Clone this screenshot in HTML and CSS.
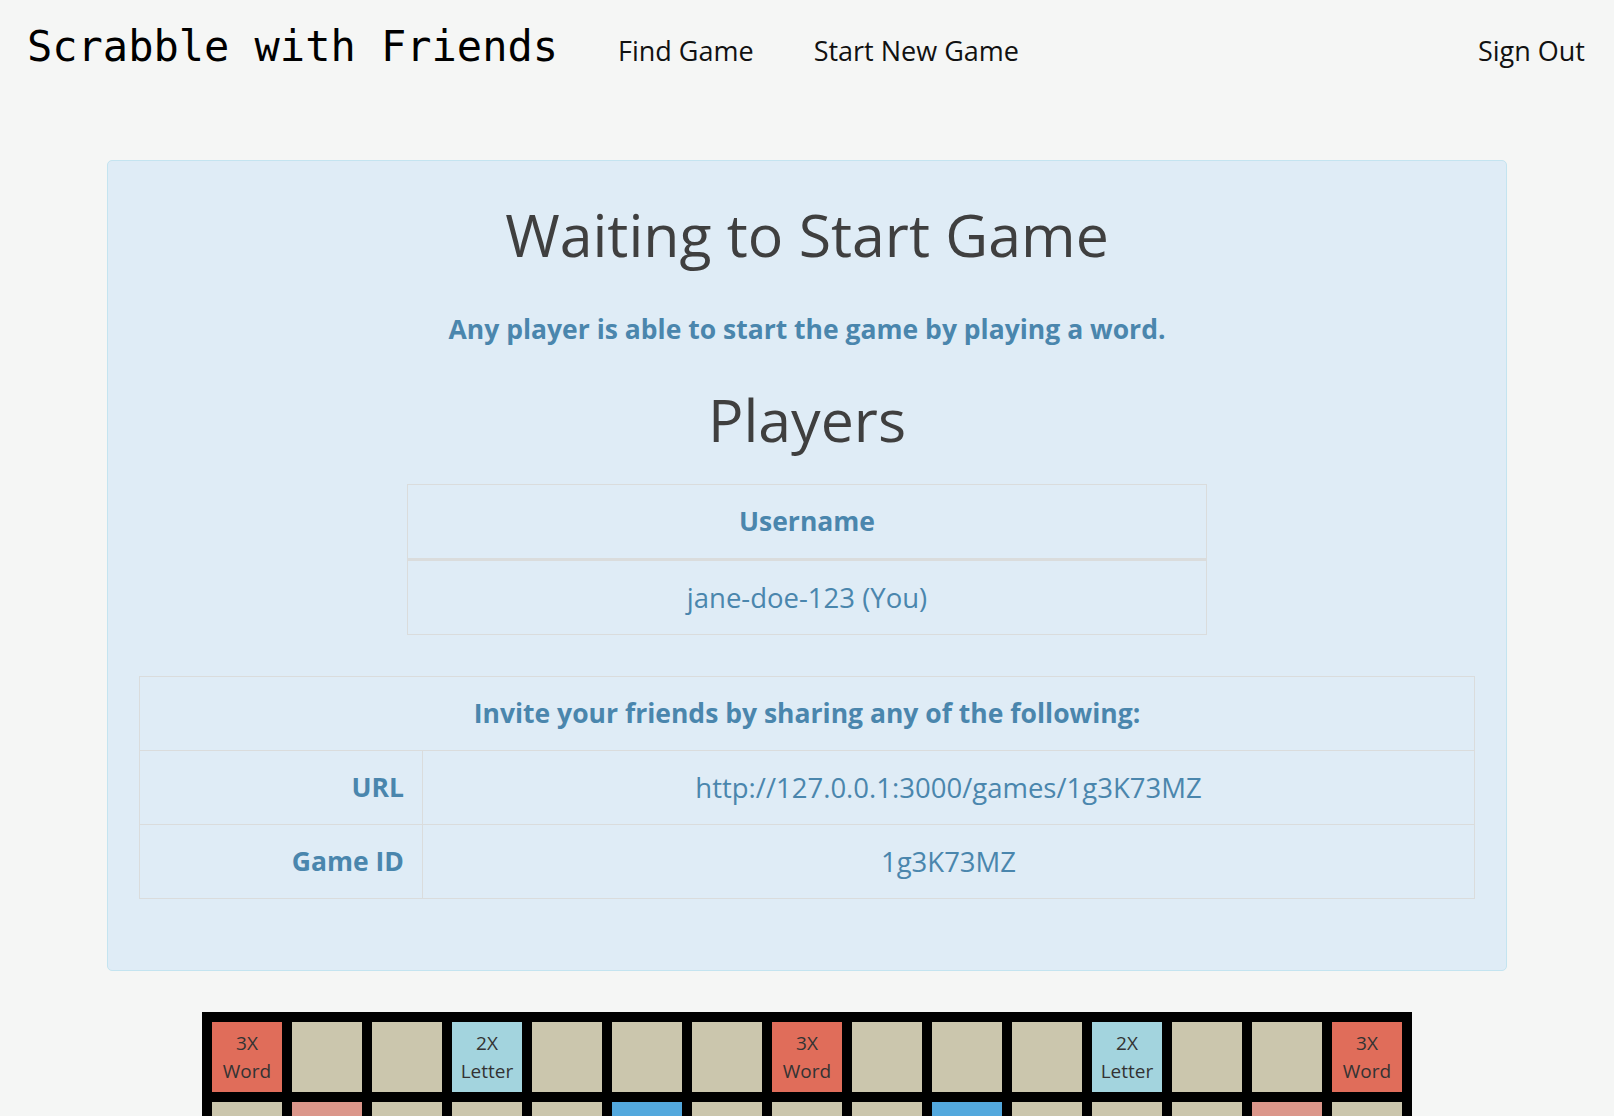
FILE: index.html
```html
<!DOCTYPE html>
<html lang="en">
<head>
<meta charset="utf-8">
<title>Scrabble with Friends</title>
<link rel="stylesheet" href="styles.css">
</head>
<body>
<header class="navbar">
  <a class="brand" href="#">Scrabble with Friends</a>
  <nav class="nav-left">
    <a href="#">Find Game</a>
    <a href="#">Start New Game</a>
  </nav>
  <nav class="nav-right">
    <a href="#">Sign Out</a>
  </nav>
</header>

<main class="main">
  <section class="panel">
    <h1 class="title">Waiting to Start Game</h1>
    <p class="subtitle">Any player is able to start the game by playing a word.</p>
    <h2 class="players-title">Players</h2>
    <table class="table players">
      <thead><tr><th>Username</th></tr></thead>
      <tbody><tr><td>jane-doe-123 (You)</td></tr></tbody>
    </table>
    <table class="table invite">
      <thead><tr><th colspan="2">Invite your friends by sharing any of the following:</th></tr></thead>
      <tbody>
        <tr><th class="label">URL</th><td>http://127.0.0.1:3000/games/1g3K73MZ</td></tr>
        <tr><th class="label">Game ID</th><td>1g3K73MZ</td></tr>
      </tbody>
    </table>
  </section>

  <div class="board">
    <div class="cell tw"><span>3X</span><span>Word</span></div><div class="cell"></div><div class="cell"></div><div class="cell dl"><span>2X</span><span>Letter</span></div><div class="cell"></div><div class="cell"></div><div class="cell"></div><div class="cell tw"><span>3X</span><span>Word</span></div><div class="cell"></div><div class="cell"></div><div class="cell"></div><div class="cell dl"><span>2X</span><span>Letter</span></div><div class="cell"></div><div class="cell"></div><div class="cell tw"><span>3X</span><span>Word</span></div>
    <div class="cell"></div><div class="cell dw"><span>2X</span><span>Word</span></div><div class="cell"></div><div class="cell"></div><div class="cell"></div><div class="cell tl"><span>3X</span><span>Letter</span></div><div class="cell"></div><div class="cell"></div><div class="cell"></div><div class="cell tl"><span>3X</span><span>Letter</span></div><div class="cell"></div><div class="cell"></div><div class="cell"></div><div class="cell dw"><span>2X</span><span>Word</span></div><div class="cell"></div>
    <div class="cell"></div><div class="cell"></div><div class="cell dw"><span>2X</span><span>Word</span></div><div class="cell"></div><div class="cell"></div><div class="cell"></div><div class="cell dl"><span>2X</span><span>Letter</span></div><div class="cell"></div><div class="cell dl"><span>2X</span><span>Letter</span></div><div class="cell"></div><div class="cell"></div><div class="cell"></div><div class="cell dw"><span>2X</span><span>Word</span></div><div class="cell"></div><div class="cell"></div>
    <div class="cell dl"><span>2X</span><span>Letter</span></div><div class="cell"></div><div class="cell"></div><div class="cell dw"><span>2X</span><span>Word</span></div><div class="cell"></div><div class="cell"></div><div class="cell"></div><div class="cell dl"><span>2X</span><span>Letter</span></div><div class="cell"></div><div class="cell"></div><div class="cell"></div><div class="cell dw"><span>2X</span><span>Word</span></div><div class="cell"></div><div class="cell"></div><div class="cell dl"><span>2X</span><span>Letter</span></div>
    <div class="cell"></div><div class="cell"></div><div class="cell"></div><div class="cell"></div><div class="cell dw"><span>2X</span><span>Word</span></div><div class="cell"></div><div class="cell"></div><div class="cell"></div><div class="cell"></div><div class="cell"></div><div class="cell dw"><span>2X</span><span>Word</span></div><div class="cell"></div><div class="cell"></div><div class="cell"></div><div class="cell"></div>
    <div class="cell"></div><div class="cell tl"><span>3X</span><span>Letter</span></div><div class="cell"></div><div class="cell"></div><div class="cell"></div><div class="cell tl"><span>3X</span><span>Letter</span></div><div class="cell"></div><div class="cell"></div><div class="cell"></div><div class="cell tl"><span>3X</span><span>Letter</span></div><div class="cell"></div><div class="cell"></div><div class="cell"></div><div class="cell tl"><span>3X</span><span>Letter</span></div><div class="cell"></div>
    <div class="cell"></div><div class="cell"></div><div class="cell dl"><span>2X</span><span>Letter</span></div><div class="cell"></div><div class="cell"></div><div class="cell"></div><div class="cell dl"><span>2X</span><span>Letter</span></div><div class="cell"></div><div class="cell dl"><span>2X</span><span>Letter</span></div><div class="cell"></div><div class="cell"></div><div class="cell"></div><div class="cell dl"><span>2X</span><span>Letter</span></div><div class="cell"></div><div class="cell"></div>
    <div class="cell tw"><span>3X</span><span>Word</span></div><div class="cell"></div><div class="cell"></div><div class="cell dl"><span>2X</span><span>Letter</span></div><div class="cell"></div><div class="cell"></div><div class="cell"></div><div class="cell dw star"><span>&#9733;</span></div><div class="cell"></div><div class="cell"></div><div class="cell"></div><div class="cell dl"><span>2X</span><span>Letter</span></div><div class="cell"></div><div class="cell"></div><div class="cell tw"><span>3X</span><span>Word</span></div>
    <div class="cell"></div><div class="cell"></div><div class="cell dl"><span>2X</span><span>Letter</span></div><div class="cell"></div><div class="cell"></div><div class="cell"></div><div class="cell dl"><span>2X</span><span>Letter</span></div><div class="cell"></div><div class="cell dl"><span>2X</span><span>Letter</span></div><div class="cell"></div><div class="cell"></div><div class="cell"></div><div class="cell dl"><span>2X</span><span>Letter</span></div><div class="cell"></div><div class="cell"></div>
    <div class="cell"></div><div class="cell tl"><span>3X</span><span>Letter</span></div><div class="cell"></div><div class="cell"></div><div class="cell"></div><div class="cell tl"><span>3X</span><span>Letter</span></div><div class="cell"></div><div class="cell"></div><div class="cell"></div><div class="cell tl"><span>3X</span><span>Letter</span></div><div class="cell"></div><div class="cell"></div><div class="cell"></div><div class="cell tl"><span>3X</span><span>Letter</span></div><div class="cell"></div>
    <div class="cell"></div><div class="cell"></div><div class="cell"></div><div class="cell"></div><div class="cell dw"><span>2X</span><span>Word</span></div><div class="cell"></div><div class="cell"></div><div class="cell"></div><div class="cell"></div><div class="cell"></div><div class="cell dw"><span>2X</span><span>Word</span></div><div class="cell"></div><div class="cell"></div><div class="cell"></div><div class="cell"></div>
    <div class="cell dl"><span>2X</span><span>Letter</span></div><div class="cell"></div><div class="cell"></div><div class="cell dw"><span>2X</span><span>Word</span></div><div class="cell"></div><div class="cell"></div><div class="cell"></div><div class="cell dl"><span>2X</span><span>Letter</span></div><div class="cell"></div><div class="cell"></div><div class="cell"></div><div class="cell dw"><span>2X</span><span>Word</span></div><div class="cell"></div><div class="cell"></div><div class="cell dl"><span>2X</span><span>Letter</span></div>
    <div class="cell"></div><div class="cell"></div><div class="cell dw"><span>2X</span><span>Word</span></div><div class="cell"></div><div class="cell"></div><div class="cell"></div><div class="cell dl"><span>2X</span><span>Letter</span></div><div class="cell"></div><div class="cell dl"><span>2X</span><span>Letter</span></div><div class="cell"></div><div class="cell"></div><div class="cell"></div><div class="cell dw"><span>2X</span><span>Word</span></div><div class="cell"></div><div class="cell"></div>
    <div class="cell"></div><div class="cell dw"><span>2X</span><span>Word</span></div><div class="cell"></div><div class="cell"></div><div class="cell"></div><div class="cell tl"><span>3X</span><span>Letter</span></div><div class="cell"></div><div class="cell"></div><div class="cell"></div><div class="cell tl"><span>3X</span><span>Letter</span></div><div class="cell"></div><div class="cell"></div><div class="cell"></div><div class="cell dw"><span>2X</span><span>Word</span></div><div class="cell"></div>
    <div class="cell tw"><span>3X</span><span>Word</span></div><div class="cell"></div><div class="cell"></div><div class="cell dl"><span>2X</span><span>Letter</span></div><div class="cell"></div><div class="cell"></div><div class="cell"></div><div class="cell tw"><span>3X</span><span>Word</span></div><div class="cell"></div><div class="cell"></div><div class="cell"></div><div class="cell dl"><span>2X</span><span>Letter</span></div><div class="cell"></div><div class="cell"></div><div class="cell tw"><span>3X</span><span>Word</span></div>
  </div>
</main>
</body>
</html>
```

FILE: styles.css
```css
* { box-sizing: border-box; }

body {
  margin: 0;
  background: #f5f6f5;
  font-family: "Open Sans", "Noto Sans", sans-serif;
  color: #3f3f3f;
}

a { text-decoration: none; color: #111; }

.navbar {
  display: flex;
  align-items: flex-start;
  height: 100px;
  padding: 0 29px 0 27px;
}

.brand {
  font-family: "DejaVu Sans Mono", "Liberation Mono", monospace;
  font-size: 42px;
  color: #000;
  line-height: 60px;
  margin-top: 17px;
}

.nav-left {
  display: flex;
  gap: 60px;
  margin-left: 60px;
  margin-top: 32px;
}

.nav-right {
  margin-left: auto;
  margin-top: 32px;
}

.nav-left a, .nav-right a {
  font-size: 27px;
  line-height: 37px;
  color: #111;
}

.main {
  padding-top: 60px;
  padding-bottom: 40px;
}

.panel {
  width: 1400px;
  margin: 0 auto;
  background: #dfecf6;
  border: 1px solid #c4e4f0;
  border-radius: 5px;
  padding: 30px 31px 71px;
  text-align: center;
}

.title {
  margin: 11px 0 0;
  font-size: 59px;
  font-weight: 400;
  line-height: 1.1;
  color: #3f3f3f;
}

.subtitle {
  margin: 45px 0 0;
  font-size: 26.5px;
  font-weight: 700;
  color: #4a86ad;
  line-height: 34px;
}

.players-title {
  margin: 41px 0 0;
  font-size: 59px;
  font-weight: 400;
  line-height: 1.1;
  color: #3f3f3f;
}

.table {
  border-collapse: collapse;
  margin: 0 auto;
  color: #4a86ad;
  font-size: 27.5px;
}

.table th, .table td {
  border: 1px solid #dadcdc;
  padding: 18px;
  line-height: 37px;
  text-align: center;
}

.table th {
  font-weight: 700;
  font-size: 26.5px;
}

.players {
  width: 800px;
  margin-top: 32px;
}

.players thead th { border-bottom-width: 3px; }

.invite {
  width: 100%;
  margin-top: 41px;
}

.invite .label {
  width: 283px;
  text-align: right;
}

.board {
  display: grid;
  grid-template-columns: repeat(15, 70px);
  grid-auto-rows: 70px;
  gap: 10px;
  padding: 10px;
  background: #000;
  width: max-content;
  margin: 41px auto 0;
}

.cell {
  background: #cbc6ad;
  display: flex;
  flex-direction: column;
  align-items: center;
  justify-content: center;
  font-size: 19px;
  line-height: 28px;
  color: #333;
}

.cell.tw { background: #e06d5a; }
.cell.dw { background: #db968a; }
.cell.dl { background: #a3d4de; }
.cell.tl { background: #53a8dd; }
.cell.star span { font-size: 30px; }
```
